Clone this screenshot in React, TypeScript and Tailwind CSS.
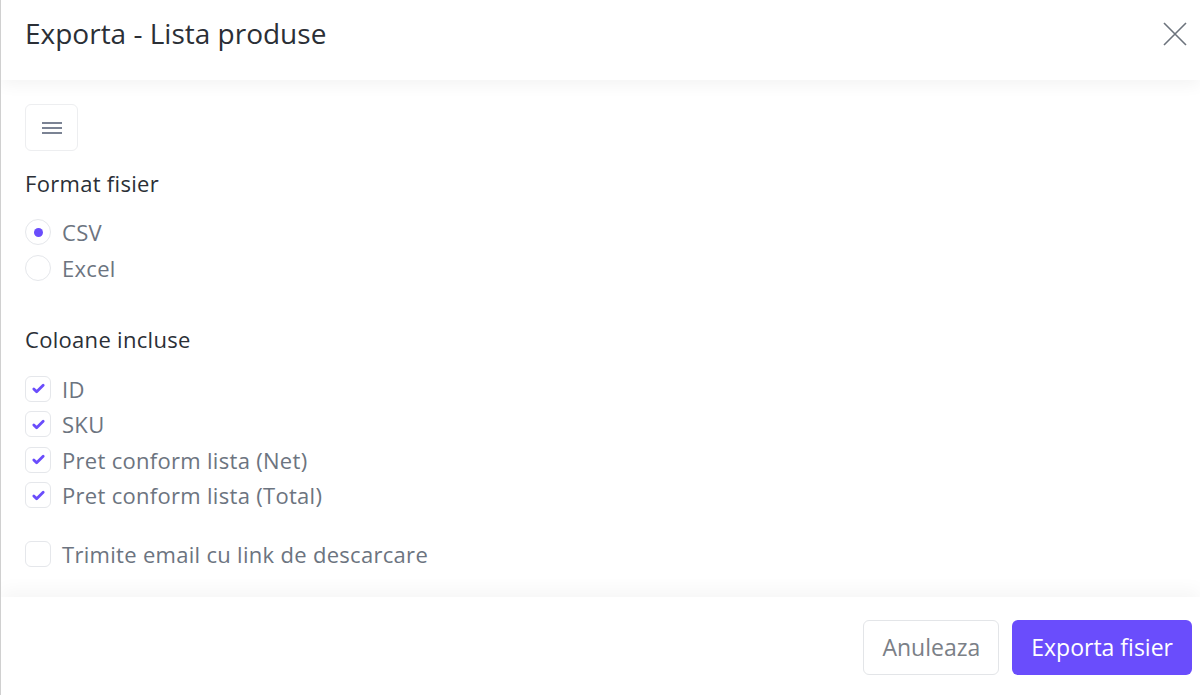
import React from "react";

const font = { fontFamily: "'Open Sans', 'Noto Sans', sans-serif" };

function Radio({ checked, label }: { checked?: boolean; label: string }) {
  return (
    <label className="flex items-center gap-[11px] h-[36px]">
      <span className="w-[26px] h-[26px] rounded-full border border-[#e5e7eb] bg-white flex items-center justify-center">
        {checked && <span className="w-[9px] h-[9px] rounded-full bg-[#6a4dfc]" />}
      </span>
      <span className="text-[22px] tracking-[0.3px] leading-[28px] text-[#6c7480]">{label}</span>
    </label>
  );
}

function Check({ checked, label }: { checked?: boolean; label: string }) {
  return (
    <label className="flex items-center gap-[11px] h-[35.5px]">
      <span className="w-[26px] h-[26px] rounded-[6px] border border-[#e5e7eb] bg-white flex items-center justify-center">
        {checked && (
          <svg width="15" height="15" viewBox="0 0 16 16" fill="none">
            <path d="M3 8.5l3 3 7-7" stroke="#6a4dfc" strokeWidth="3" strokeLinecap="round" strokeLinejoin="round" />
          </svg>
        )}
      </span>
      <span className="text-[22px] tracking-[0.3px] leading-[28px] text-[#6c7480]">{label}</span>
    </label>
  );
}

export default function App() {
  return (
    <div style={font} className="w-[1200px] h-[695px] bg-white border-l border-[#d0d0d0] flex flex-col overflow-hidden">
      <header className="h-[80px] shrink-0 flex items-center justify-between pl-[24px] pr-[12px] relative z-10 shadow-[0_6px_14px_rgba(0,0,0,0.045)]">
        <h1 className="text-[28px] text-[#2b2f36] leading-none -mt-[15px]">Exporta - Lista produse</h1>
        <svg width="26" height="26" viewBox="0 0 26 26" className="-mt-[12px]">
          <path d="M2 2L24 24M24 2L2 24" stroke="#6c737c" strokeWidth="1.6" />
        </svg>
      </header>
      <main className="flex-1 pl-[24px] pt-[24px]">
        <button className="w-[53px] h-[47px] rounded-[6px] border border-[#edeef0] flex items-center justify-center">
          <svg width="22" height="14" viewBox="0 0 22 14">
            <path d="M1 2H21M1 7H21M1 12H21" stroke="#7b8394" strokeWidth="2" />
          </svg>
        </button>
        <div className="text-[22px] tracking-[0.3px] text-[#2b2f36] mt-[19px] leading-[26px]">Format fisier</div>
        <div className="mt-[18px]">
          <Radio checked label="CSV" />
          <Radio label="Excel" />
        </div>
        <div className="text-[22px] tracking-[0.3px] text-[#2b2f36] mt-[40px] leading-[26px]">Coloane incluse</div>
        <div className="mt-[19px]">
          <Check checked label="ID" />
          <Check checked label="SKU" />
          <Check checked label="Pret conform lista (Net)" />
          <Check checked label="Pret conform lista (Total)" />
        </div>
        <div className="mt-[23px]">
          <Check label="Trimite email cu link de descarcare" />
        </div>
      </main>
      <footer className="h-[98px] shrink-0 relative z-10 bg-white shadow-[0_-8px_16px_rgba(0,0,0,0.035)] flex items-center justify-end gap-[13px] pr-[8px] pt-[2px]">
        <button className="h-[55px] px-[18px] rounded-[6px] border border-[#e3e5e8] text-[23px] text-[#7b8087] bg-white">Anuleaza</button>
        <button className="h-[55px] px-[19px] rounded-[6px] bg-[#6a4dfc] text-[23px] text-white">Exporta fisier</button>
      </footer>
    </div>
  );
}
